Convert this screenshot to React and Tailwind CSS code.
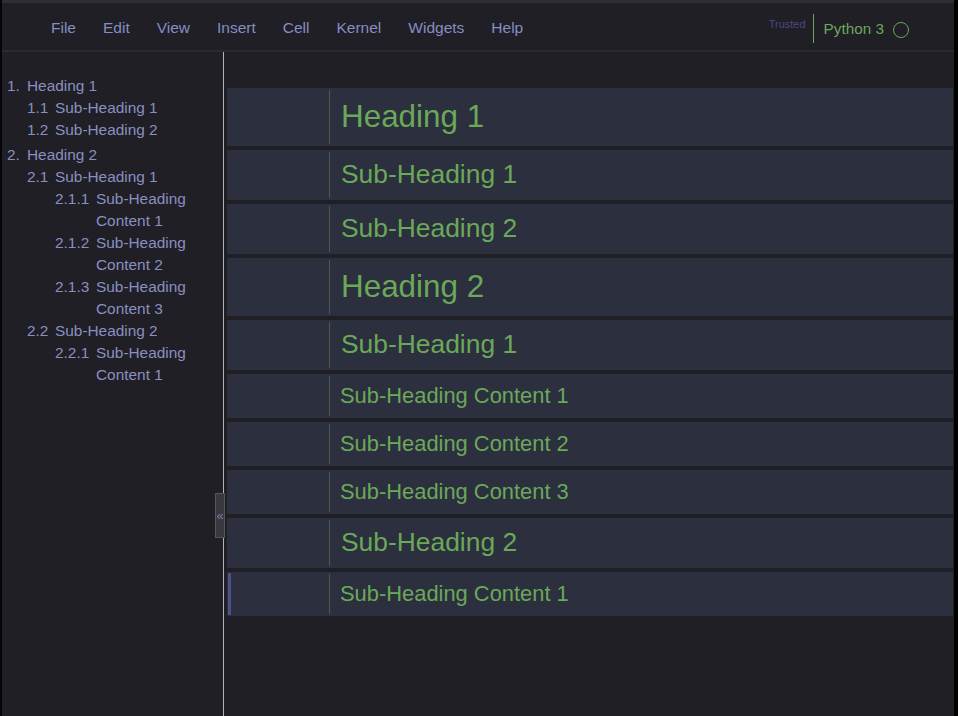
import React from 'react';

const menu = ['File', 'Edit', 'View', 'Insert', 'Cell', 'Kernel', 'Widgets', 'Help'];

const toc = [
  { level: 1, num: '1.', text: 'Heading 1' },
  { level: 2, num: '1.1', text: 'Sub-Heading 1' },
  { level: 2, num: '1.2', text: 'Sub-Heading 2' },
  { level: 1, num: '2.', text: 'Heading 2' },
  { level: 2, num: '2.1', text: 'Sub-Heading 1' },
  { level: 3, num: '2.1.1', text: 'Sub-Heading Content 1' },
  { level: 3, num: '2.1.2', text: 'Sub-Heading Content 2' },
  { level: 3, num: '2.1.3', text: 'Sub-Heading Content 3' },
  { level: 2, num: '2.2', text: 'Sub-Heading 2' },
  { level: 3, num: '2.2.1', text: 'Sub-Heading Content 1' },
];

const cells = [
  { level: 1, text: 'Heading 1' },
  { level: 2, text: 'Sub-Heading 1' },
  { level: 2, text: 'Sub-Heading 2' },
  { level: 1, text: 'Heading 2' },
  { level: 2, text: 'Sub-Heading 1' },
  { level: 3, text: 'Sub-Heading Content 1' },
  { level: 3, text: 'Sub-Heading Content 2' },
  { level: 3, text: 'Sub-Heading Content 3' },
  { level: 2, text: 'Sub-Heading 2' },
  { level: 3, text: 'Sub-Heading Content 1', selected: true },
];

const tocStyles = {
  1: { row: 'pl-[5px] mt-[3px] first:mt-0', num: 'w-[20px]' },
  2: { row: 'pl-[25px]', num: 'w-[28px]' },
  3: { row: 'pl-[53px]', num: 'w-[41px]' },
};

const cellStyles = {
  1: { row: 'h-[58px]', text: 'text-[31.4px] pl-[11px]' },
  2: { row: 'h-[50px]', text: 'text-[26.4px] pl-[11px]' },
  3: { row: 'h-[44px]', text: 'text-[21.9px] pl-[10px]' },
};

const Header = () => (
  <div className="h-[49px] flex items-center border-b-2 border-[#2a2a35] bg-[#1f1f25]">
    <div className="flex gap-[27px] pl-[49px] pt-[3px] text-[15.5px] text-[#878dc2]">
      {menu.map(item => (
        <span key={item}>{item}</span>
      ))}
    </div>
    <div className="ml-auto mr-[45px] flex items-center pt-[3px]">
      <span className="text-[11px] text-[#4a4a82] -mt-[8px]">Trusted</span>
      <div className="ml-[7px] w-px h-[29px] bg-[#6aa85a] mt-[1px]" />
      <span className="ml-[10px] text-[15.3px] text-[#6aa85a] pt-[2px]">Python 3</span>
      <div className="ml-[9px] mt-[4px] w-4 h-4 rounded-full border-[1.5px] border-[#6aa85a]" />
    </div>
  </div>
);

const Sidebar = () => (
  <div className="relative w-[222px] shrink-0 border-r border-[#b4b4b8] pt-[23px] text-[15.4px] leading-[22px] text-[#8a8fc0]">
    {toc.map((item, i) => {
      const s = tocStyles[item.level];
      return (
        <div key={i} className={`flex ${s.row}`}>
          <span className={`${s.num} shrink-0`}>{item.num}</span>
          <span className="pr-[20px]">{item.text}</span>
        </div>
      );
    })}
    <div className="absolute -right-[2px] top-[441px] w-[10px] h-[45px] bg-[#38383e] border border-[#55555c] flex items-center justify-center text-[13px] text-[#777ca8] leading-none">
      «
    </div>
  </div>
);

const Cell = ({ cell }) => {
  const s = cellStyles[cell.level];
  return (
    <div className={`flex items-stretch bg-[#2c2f3d] ${s.row}`}>
      <div className="w-[102px] shrink-0 flex py-[1px] pl-[1px]">
        {cell.selected && <div className="w-[3px] bg-[#4b5286]" />}
      </div>
      <div className="w-px bg-[#4b5a4e] my-[2px]" />
      <div className={`flex items-center text-[#6aa85a] ${s.text}`}>{cell.text}</div>
    </div>
  );
};

const App = () => {
  return (
    <div className="w-[958px] h-[716px] flex bg-black overflow-hidden font-['Liberation_Sans',Arial,sans-serif]">
      <div className="w-[2px] shrink-0 bg-[#060606]" />
      <div className="flex-1 flex flex-col bg-[#1f1f25]">
        <div className="h-[3px] bg-[#2f2f33]" />
        <Header />
        <div className="flex-1 flex">
          <Sidebar />
          <div className="flex-1 pt-[36px] pl-[3px] pr-[1px] flex flex-col gap-[4px]">
            {cells.map((cell, i) => (
              <Cell key={i} cell={cell} />
            ))}
          </div>
        </div>
      </div>
      <div className="w-[4px] shrink-0 bg-black" />
    </div>
  );
};

export default App;
